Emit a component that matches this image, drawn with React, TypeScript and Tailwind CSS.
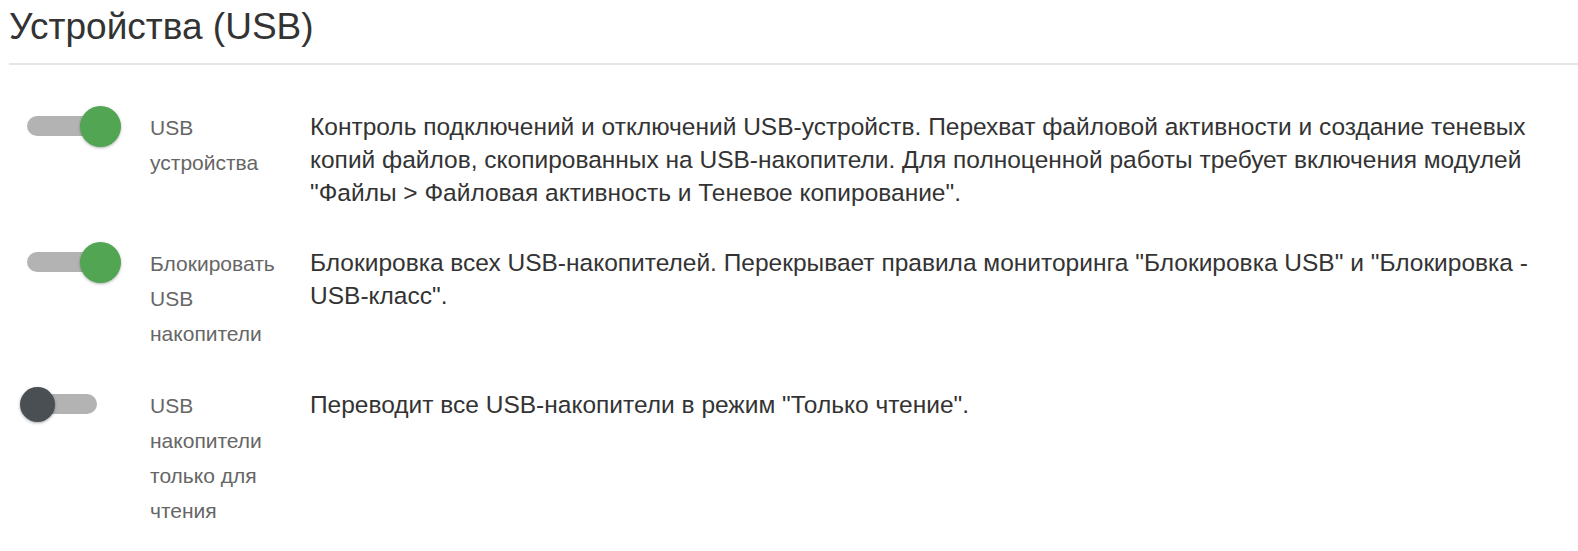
import React from "react";

const settings = [
  {
    label: "USB устройства",
    on: true,
    text: 'Контроль подключений и отключений USB-устройств. Перехват файловой активности и создание теневых копий файлов, скопированных на USB-накопители. Для полноценной работы требует включения модулей "Файлы > Файловая активность и Теневое копирование".',
  },
  {
    label: "Блокировать USB накопители",
    on: true,
    text: 'Блокировка всех USB-накопителей. Перекрывает правила мониторинга "Блокировка USB" и "Блокировка - USB-класс".',
  },
  {
    label: "USB накопители только для чтения",
    on: false,
    text: 'Переводит все USB-накопители в режим "Только чтение".',
  },
];

function Toggle({ on }: { on: boolean }) {
  return (
    <div className="relative ml-[18px] mt-[6px] h-[20px] w-[70px] rounded-full bg-[#b3b3b3]">
      {on ? (
        <span className="absolute left-[53px] top-[-10px] h-[41px] w-[41px] rounded-full bg-[#52a552] shadow-[0_1px_3px_rgba(0,0,0,0.3)]" />
      ) : (
        <span className="absolute left-[-7px] top-[-7px] h-[35px] w-[35px] rounded-full bg-[#4a4f54] shadow-[0_1px_3px_rgba(0,0,0,0.35)]" />
      )}
    </div>
  );
}

export default function App() {
  return (
    <div className="min-h-[551px] bg-white pl-[9px] font-['Liberation_Sans',Arial,sans-serif]">
      <h1 className="border-b-2 border-[#e5e5e5] pb-[16px] pt-[7px] text-[37px] font-normal leading-[40px] text-[#333]">
        Устройства (USB)
      </h1>
      <div className="mt-[45px] flex flex-col gap-y-[37px]">
        {settings.map((s) => (
          <div key={s.label} className="flex items-start">
            <div className="w-[141px] shrink-0">
              <Toggle on={s.on} />
            </div>
            <div className="w-[160px] shrink-0 pr-[15px] text-[21px] leading-[35px] text-[#666]">
              {s.label}
            </div>
            <p className="w-[1240px] text-[24.5px] leading-[33px] text-[#333]">{s.text}</p>
          </div>
        ))}
      </div>
    </div>
  );
}
